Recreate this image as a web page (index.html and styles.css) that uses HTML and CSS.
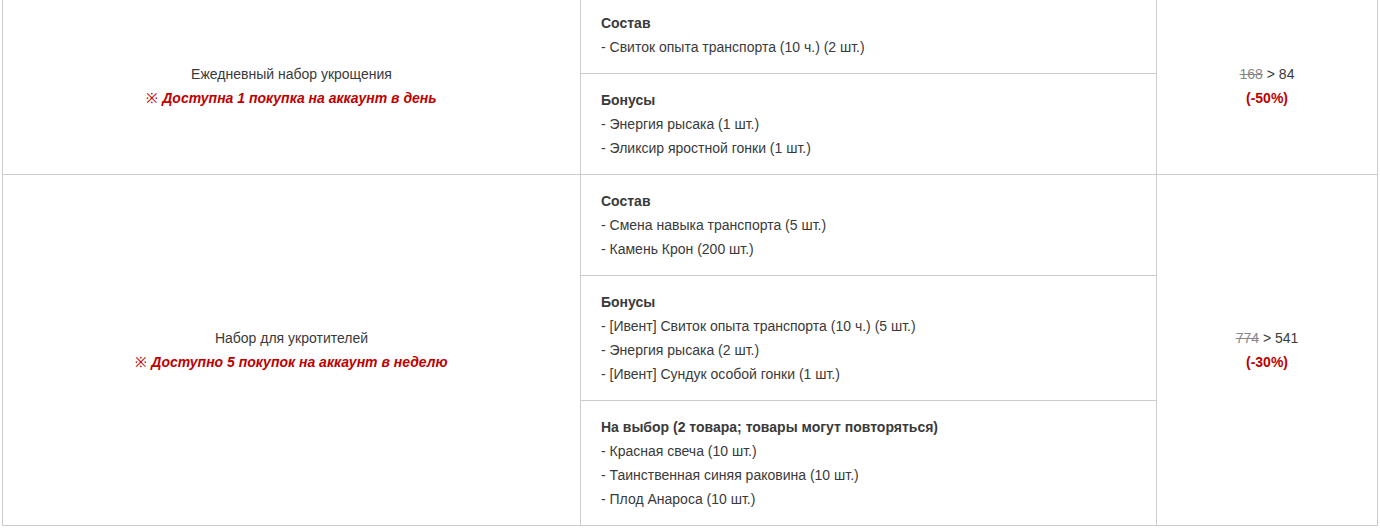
FILE: index.html
```html
<!DOCTYPE html>
<html lang="ru">
<head>
<meta charset="utf-8">
<title>Наборы</title>
<link rel="stylesheet" href="styles.css">
</head>
<body>
<div class="table">
  <div class="product">
    <div class="cell name">
      <div>Ежедневный набор укрощения</div>
      <div class="note"><span class="mark">※</span> <em>Доступна 1 покупка на аккаунт в день</em></div>
    </div>
    <div class="cell contents">
      <div class="group">
        <div class="title">Состав</div>
        <div>- Свиток опыта транспорта (10 ч.) (2 шт.)</div>
      </div>
      <div class="group">
        <div class="title">Бонусы</div>
        <div>- Энергия рысака (1 шт.)</div>
        <div>- Эликсир яростной гонки (1 шт.)</div>
      </div>
    </div>
    <div class="cell price">
      <div><s class="old">168</s> &gt; 84</div>
      <div class="discount">(-50%)</div>
    </div>
  </div>
  <div class="product">
    <div class="cell name">
      <div>Набор для укротителей</div>
      <div class="note"><span class="mark">※</span> <em>Доступно 5 покупок на аккаунт в неделю</em></div>
    </div>
    <div class="cell contents">
      <div class="group">
        <div class="title">Состав</div>
        <div>- Смена навыка транспорта (5 шт.)</div>
        <div>- Камень Крон (200 шт.)</div>
      </div>
      <div class="group">
        <div class="title">Бонусы</div>
        <div>- [Ивент] Свиток опыта транспорта (10 ч.) (5 шт.)</div>
        <div>- Энергия рысака (2 шт.)</div>
        <div>- [Ивент] Сундук особой гонки (1 шт.)</div>
      </div>
      <div class="group">
        <div class="title">На выбор (2 товара; товары могут повторяться)</div>
        <div>- Красная свеча (10 шт.)</div>
        <div>- Таинственная синяя раковина (10 шт.)</div>
        <div>- Плод Анароса (10 шт.)</div>
      </div>
    </div>
    <div class="cell price">
      <div><s class="old">774</s> &gt; 541</div>
      <div class="discount">(-30%)</div>
    </div>
  </div>
</div>
</body>
</html>
```

FILE: styles.css
```css
* { box-sizing: border-box; }
html, body { margin: 0; padding: 0; background: #fff; }
body {
  font-family: "Liberation Sans", Arial, sans-serif;
  font-size: 14px;
  line-height: 24px;
  color: #3a3a3a;
}
.table {
  margin: -4px 0 0 2px;
  width: 1376px;
  border-left: 1px solid #ccc;
  border-top: 1px solid #ccc;
}
.product {
  display: grid;
  grid-template-columns: 578px 576px 221px;
}
.cell {
  border-right: 1px solid #ccc;
  border-bottom: 1px solid #ccc;
}
.name, .price {
  display: flex;
  flex-direction: column;
  justify-content: center;
  align-items: center;
  text-align: center;
}
.note {
  color: #c00000;
  font-weight: bold;
}
.note .mark { font-weight: normal; }
.note em { font-style: italic; }
.group {
  padding: 14px 20px;
  border-bottom: 1px solid #ccc;
}
.group:last-child { border-bottom: none; }
.title { font-weight: bold; }
.old { color: #888; }
.discount { color: #c00000; font-weight: bold; }
```
